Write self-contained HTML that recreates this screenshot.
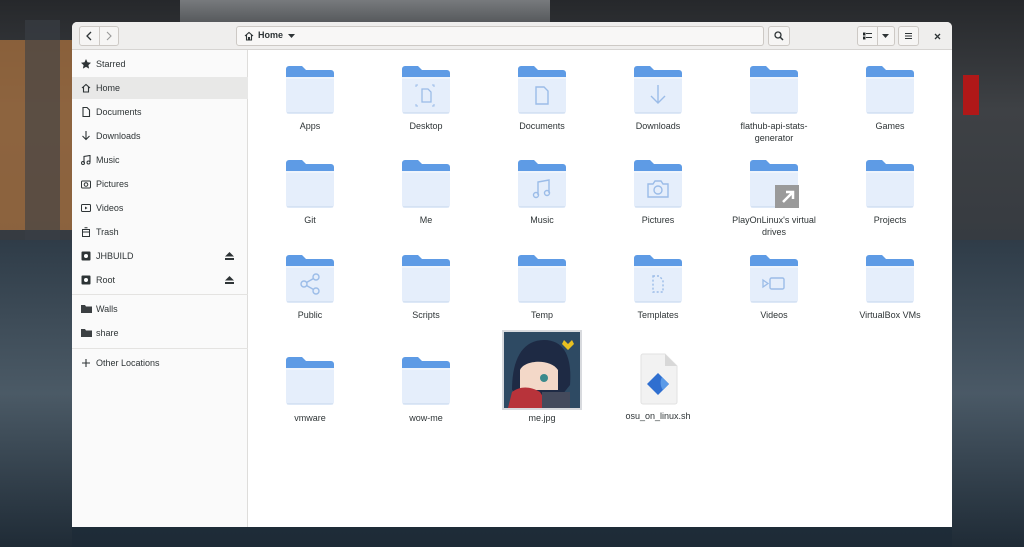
<!DOCTYPE html>
<html><head><meta charset="utf-8"><style>
*{margin:0;padding:0;box-sizing:border-box}
body{width:1024px;height:547px;overflow:hidden;position:relative;font-family:"Liberation Sans",sans-serif;font-size:9px;color:#2e3436;
background:linear-gradient(180deg,#26282b 0%,#3e4145 20%,#383c41 40%,#2a3642 60%,#283846 75%,#1d2a36 100%)}
.bgp{position:absolute}
.win{position:absolute;left:72px;top:22px;width:880px;height:505px;background:#fff;border-radius:5px 5px 0 0;overflow:hidden}
.hdr{position:absolute;left:0;top:0;width:880px;height:28px;background:#efeeed;border-bottom:1px solid #d6d4d2}
.btn{position:absolute;top:4px;height:20px;border:1px solid #cdc9c5;border-radius:3px;background:#f6f5f4}
.side{position:absolute;left:0;top:28px;width:176px;height:477px;background:#fafafa;border-right:1px solid #dedddb}
.si{position:absolute;left:0;width:176px;height:22px;line-height:22px;padding-left:24px;font-size:9px}
.si svg{position:absolute;left:9px;top:6px}
.sep{position:absolute;left:0;width:176px;height:1px;background:#e4e3e1}
.it{position:absolute;width:116px;text-align:center;font-size:9px;line-height:12px}
.it svg.f{display:block;margin:0 auto}
</style></head><body>
<div class="bgp" style="left:0;top:40px;width:72px;height:190px;background:#a8703e;opacity:.75"></div>
<div class="bgp" style="left:25px;top:20px;width:35px;height:220px;background:#3a4046;opacity:.6"></div>
<div class="bgp" style="left:180px;top:0;width:370px;height:22px;background:linear-gradient(180deg,#9a9da0,#6a6d70);opacity:.7"></div>
<div class="bgp" style="left:963px;top:75px;width:16px;height:40px;background:#b01818"></div>
<div class="bgp" style="left:952px;top:240px;width:72px;height:307px;background:linear-gradient(180deg,#2f3c48,#4a5966 50%,#1f2b36)"></div>
<div class="bgp" style="left:0;top:240px;width:72px;height:307px;background:linear-gradient(180deg,#2f3c48,#4b5a66 50%,#1f2b36)"></div>
<svg width="0" height="0" style="position:absolute"><defs>
<symbol id="fd" viewBox="0 0 50 50"><path d="M1 5a3 3 0 0 1 3-3h13l4 4h25a3 3 0 0 1 3 3v10H1z" fill="#5e9be5"/><path d="M1 13h48v34a3 3 0 0 1-3 3H4a3 3 0 0 1-3-3z" fill="#e5eefb"/><path d="M1 13h48v2H1z" fill="#eef4fc"/><path d="M2 48h46v1.5H2z" fill="#d5e2f3"/></symbol>
</defs></svg>
<div class="win">
 <div class="hdr">
  <div class="btn" style="left:7px;width:40px"></div>
  <div style="position:absolute;left:27px;top:4px;width:1px;height:20px;background:#cdc9c5"></div>
  <svg style="position:absolute;left:13px;top:9px" width="8" height="10"><path d="M6 1L2 5l4 4" stroke="#2e3436" stroke-width="1.3" fill="none"/></svg>
  <svg style="position:absolute;left:33px;top:9px" width="8" height="10"><path d="M2 1l4 4-4 4" stroke="#999" stroke-width="1.1" fill="none"/></svg>
  <div class="btn" style="left:164px;width:528px;background:#f8f7f6"></div>
  <svg style="position:absolute;left:172px;top:9px" width="10" height="10"><path d="M1 5L5 1.5 9 5M2.5 4v5h5V4M4.5 9V6.5h1V9" stroke="#2e3436" stroke-width="1.1" fill="none"/></svg>
  <div style="position:absolute;left:186px;top:8px;font-size:9px;font-weight:bold;color:#2e3436">Home</div>
  <svg style="position:absolute;left:216px;top:12px" width="7" height="4"><path d="M0 0h7L3.5 4z" fill="#2e3436"/></svg>
  <div class="btn" style="left:696px;width:22px"></div>
  <svg style="position:absolute;left:702px;top:9px" width="10" height="10"><circle cx="4" cy="4" r="3" stroke="#2e3436" stroke-width="1.3" fill="none"/><path d="M6 6l3 3" stroke="#2e3436" stroke-width="1.5"/></svg>
  <div class="btn" style="left:785px;width:38px"></div>
  <div style="position:absolute;left:805px;top:4px;width:1px;height:20px;background:#cdc9c5"></div>
  <svg style="position:absolute;left:791px;top:10px" width="9" height="8"><path d="M0 1h2v2H0zM0 5h2v2H0zM3 1.5h6M3 5.5h6" stroke="#2e3436" stroke-width="1"/></svg>
  <svg style="position:absolute;left:810px;top:12px" width="7" height="4"><path d="M0 0h7L3.5 4z" fill="#2e3436"/></svg>
  <div class="btn" style="left:826px;width:21px"></div>
  <svg style="position:absolute;left:832px;top:10px" width="9" height="8"><path d="M1 1.5h7M1 4h7M1 6.5h7" stroke="#2e3436" stroke-width="1"/></svg>
  <svg style="position:absolute;left:862px;top:11px" width="7" height="7"><path d="M1 1l5 5M6 1L1 6" stroke="#2e3436" stroke-width="1.3"/></svg>
 </div>
 <div class="side">
  <div class="si" style="top:3px"><svg width="10" height="10"><path d="M5 0l1.5 3.3 3.5.4-2.6 2.4.7 3.5L5 7.9 1.9 9.6l.7-3.5L0 3.7l3.5-.4z" fill="#2e3436"/></svg>Starred</div>
  <div class="si" style="top:27px;background:#e8e8e7"><svg width="10" height="10"><path d="M1 5L5 1.5 9 5M2.5 4v5h5V4" stroke="#2e3436" stroke-width="1.1" fill="none"/></svg>Home</div>
  <div class="si" style="top:51px"><svg width="10" height="10"><path d="M2 .5h4l2.5 2.5v6.5H2z" stroke="#2e3436" stroke-width="1.1" fill="none"/></svg>Documents</div>
  <div class="si" style="top:75px"><svg width="10" height="10"><path d="M5 0v8M1.5 5L5 8.5 8.5 5" stroke="#2e3436" stroke-width="1.1" fill="none"/></svg>Downloads</div>
  <div class="si" style="top:99px"><svg width="10" height="10"><path d="M3 8V1.5l6-1V7" stroke="#2e3436" stroke-width="1.1" fill="none"/><circle cx="2" cy="8" r="1.5" fill="none" stroke="#2e3436"/><circle cx="7.5" cy="7.5" r="1.5" fill="none" stroke="#2e3436"/></svg>Music</div>
  <div class="si" style="top:123px"><svg width="10" height="10"><rect x=".5" y="2" width="9" height="7" rx="1" fill="none" stroke="#2e3436"/><circle cx="5" cy="5.5" r="1.8" fill="none" stroke="#2e3436"/></svg>Pictures</div>
  <div class="si" style="top:147px"><svg width="10" height="10"><rect x=".5" y="1.5" width="9" height="7" rx="1" fill="none" stroke="#2e3436"/><path d="M4 3.5v3l2.5-1.5z" fill="#2e3436"/></svg>Videos</div>
  <div class="si" style="top:171px"><svg width="10" height="10"><path d="M1.5 2.5h7v7h-7zM1.5 5h7M3.5 .8h3" stroke="#2e3436" fill="none"/></svg>Trash</div>
  <div class="si" style="top:195px"><svg width="10" height="10"><rect x=".5" y=".5" width="9" height="9" rx="1" fill="#2e3436"/><circle cx="5" cy="5" r="2" fill="#fff"/></svg>JHBUILD<svg style="left:153px;top:7px" width="9" height="8"><path d="M4.5 0L9 4.5H0z M0 6h9v2H0z" fill="#2e3436"/></svg></div>
  <div class="si" style="top:219px"><svg width="10" height="10"><rect x=".5" y=".5" width="9" height="9" rx="1" fill="#2e3436"/><circle cx="5" cy="5" r="2" fill="#fff"/></svg>Root<svg style="left:153px;top:7px" width="9" height="8"><path d="M4.5 0L9 4.5H0z M0 6h9v2H0z" fill="#2e3436"/></svg></div>
  <div class="sep" style="top:244px"></div>
  <div class="si" style="top:248px"><svg width="11" height="10"><path d="M0 1h4l1 1.5h6V9H0z" fill="#3b3f42"/></svg>Walls</div>
  <div class="si" style="top:272px"><svg width="11" height="10"><path d="M0 1h4l1 1.5h6V9H0z" fill="#3b3f42"/></svg>share</div>
  <div class="sep" style="top:298px"></div>
  <div class="si" style="top:302px"><svg width="10" height="10"><path d="M5 1v8M1 5h8" stroke="#2e3436" stroke-width="1.1"/></svg>Other Locations</div>
 </div>
</div>
<div class="it" style="left:252px;top:64px"><svg class="f" width="50" height="50"><use href="#fd"/></svg><div style="margin-top:6px">Apps</div></div>
<div class="it" style="left:368px;top:64px"><svg class="f" width="50" height="50"><use href="#fd"/><path d="M21 25h6l3 3v10h-9z" fill="none" stroke="#9bbce8" stroke-width="1.3"/><path d="M15 23v-2h2M33 23v-2h-2M15 40v2h2M33 40v2h-2" stroke="#9bbce8" fill="none"/></svg><div style="margin-top:6px">Desktop</div></div>
<div class="it" style="left:484px;top:64px"><svg class="f" width="50" height="50"><use href="#fd"/><path d="M19 23h8l4 4v13H19z" fill="none" stroke="#9bbce8" stroke-width="1.4"/></svg><div style="margin-top:6px">Documents</div></div>
<div class="it" style="left:600px;top:64px"><svg class="f" width="50" height="50"><use href="#fd"/><path d="M25 21v18M18 32l7 7 7-7" fill="none" stroke="#9bbce8" stroke-width="1.4"/></svg><div style="margin-top:6px">Downloads</div></div>
<div class="it" style="left:716px;top:64px"><svg class="f" width="50" height="50"><use href="#fd"/></svg><div style="margin-top:6px">flathub-api-stats-<br>generator</div></div>
<div class="it" style="left:832px;top:64px"><svg class="f" width="50" height="50"><use href="#fd"/></svg><div style="margin-top:6px">Games</div></div>

<div class="it" style="left:252px;top:158px"><svg class="f" width="50" height="50"><use href="#fd"/></svg><div style="margin-top:6px">Git</div></div>
<div class="it" style="left:368px;top:158px"><svg class="f" width="50" height="50"><use href="#fd"/></svg><div style="margin-top:6px">Me</div></div>
<div class="it" style="left:484px;top:158px"><svg class="f" width="50" height="50"><use href="#fd"/><path d="M21 37V24l11-2v13" fill="none" stroke="#9bbce8" stroke-width="1.4"/><circle cx="19" cy="37" r="2.5" fill="none" stroke="#9bbce8" stroke-width="1.4"/><circle cx="30" cy="35" r="2.5" fill="none" stroke="#9bbce8" stroke-width="1.4"/></svg><div style="margin-top:6px">Music</div></div>
<div class="it" style="left:600px;top:158px"><svg class="f" width="50" height="50"><use href="#fd"/><path d="M15 26h5l2-3h6l2 3h5v13H15z" fill="none" stroke="#9bbce8" stroke-width="1.4"/><circle cx="25" cy="32" r="4" fill="none" stroke="#9bbce8" stroke-width="1.4"/></svg><div style="margin-top:6px">Pictures</div></div>
<div class="it" style="left:716px;top:158px"><svg class="f" width="50" height="50"><use href="#fd"/><rect x="26" y="27" width="27" height="25" fill="#9a9a9a"/><path d="M34 44l10-10M37 34h7v7" stroke="#fff" stroke-width="2.5" fill="none"/></svg><div style="margin-top:6px">PlayOnLinux's virtual<br>drives</div></div>
<div class="it" style="left:832px;top:158px"><svg class="f" width="50" height="50"><use href="#fd"/></svg><div style="margin-top:6px">Projects</div></div>

<div class="it" style="left:252px;top:253px"><svg class="f" width="50" height="50"><use href="#fd"/><circle cx="19" cy="31" r="3" fill="none" stroke="#9bbce8" stroke-width="1.4"/><circle cx="31" cy="24" r="3" fill="none" stroke="#9bbce8" stroke-width="1.4"/><circle cx="31" cy="38" r="3" fill="none" stroke="#9bbce8" stroke-width="1.4"/><path d="M21.5 29.5l7-4M21.5 32.5l7 4" stroke="#9bbce8" stroke-width="1.4"/></svg><div style="margin-top:6px">Public</div></div>
<div class="it" style="left:368px;top:253px"><svg class="f" width="50" height="50"><use href="#fd"/></svg><div style="margin-top:6px">Scripts</div></div>
<div class="it" style="left:484px;top:253px"><svg class="f" width="50" height="50"><use href="#fd"/></svg><div style="margin-top:6px">Temp</div></div>
<div class="it" style="left:600px;top:253px"><svg class="f" width="50" height="50"><use href="#fd"/><path d="M20 23h6l4 4v12H20z" fill="none" stroke="#9bbce8" stroke-width="1.4" stroke-dasharray="2 2"/></svg><div style="margin-top:6px">Templates</div></div>
<div class="it" style="left:716px;top:253px"><svg class="f" width="50" height="50"><use href="#fd"/><rect x="21" y="25" width="14" height="11" rx="1.5" fill="none" stroke="#9bbce8" stroke-width="1.4"/><path d="M14 27l5 3.5-5 3.5z" fill="none" stroke="#9bbce8" stroke-width="1.3"/></svg><div style="margin-top:6px">Videos</div></div>
<div class="it" style="left:832px;top:253px"><svg class="f" width="50" height="50"><use href="#fd"/></svg><div style="margin-top:6px">VirtualBox VMs</div></div>

<div class="it" style="left:252px;top:355px"><svg class="f" width="50" height="50"><use href="#fd"/></svg><div style="margin-top:7px">vmware</div></div>
<div class="it" style="left:368px;top:355px"><svg class="f" width="50" height="50"><use href="#fd"/></svg><div style="margin-top:7px">wow-me</div></div>
<div class="it" style="left:484px;top:330px"><svg class="f" width="80" height="80" viewBox="0 0 80 80"><rect x="0" y="0" width="80" height="80" fill="#d8dade"/><rect x="2" y="2" width="76" height="76" fill="#2e4a63"/><path d="M10 60c0-30 10-50 32-50s28 20 26 45l-8 10H18z" fill="#1e2a44"/><path d="M18 40c4-10 30-12 38 0v20H18z" fill="#f3d8c8"/><circle cx="42" cy="48" r="4" fill="#3b8a8c"/><path d="M10 62c8-6 18-6 28 0l10 16H6z" fill="#b8333a"/><path d="M40 62h28v16H40z" fill="#444a5c"/><path d="M62 10l4 4 4-4 2 4-6 6-6-6z" fill="#e8c020"/></svg><div style="margin-top:2px">me.jpg</div></div>
<div class="it" style="left:600px;top:353px"><svg class="f" width="50" height="52" viewBox="0 0 50 52"><path d="M10 1h22l12 12v36a2 2 0 0 1-2 2H10a2 2 0 0 1-2-2V3a2 2 0 0 1 2-2z" fill="#f2f2f2" stroke="#e2e2e2"/><path d="M32 1v12h12z" fill="#d8d8d8"/><path d="M25 20l11 11-11 11-11-11z" fill="#2f6fd0"/><path d="M25 20l11 11-6 6c-3-4-3-9-1-13z" fill="#5a9ae8"/></svg><div style="margin-top:5px">osu_on_linux.sh</div></div>
</body></html>
